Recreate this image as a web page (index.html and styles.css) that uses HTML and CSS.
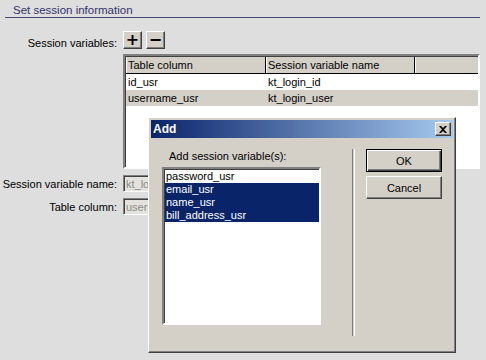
FILE: index.html
```html
<!DOCTYPE html>
<html lang="en">
<head>
    <meta charset="UTF-8">
    <title>Set session information</title>
    <link rel="stylesheet" href="styles.css">
</head>
<body>
    <div class="section-title">Set session information</div>

    <div class="form">
        <div class="label label-top">Session variables:</div>
        <div class="controls">
            <div class="tool-buttons">
                <button class="tool-btn">+</button>
                <button class="tool-btn">&minus;</button>
            </div>
            <div class="grid">
                <div class="grid-head">
                    <div class="head-cell col-1">Table column</div>
                    <div class="head-cell col-2">Session variable name</div>
                    <div class="head-cell col-fill"></div>
                </div>
                <div class="grid-row">
                    <div class="col-1">id_usr</div>
                    <div class="col-2">kt_login_id</div>
                </div>
                <div class="grid-row grid-row-alt">
                    <div class="col-1">username_usr</div>
                    <div class="col-2">kt_login_user</div>
                </div>
            </div>
        </div>

        <div class="label">Session variable name:</div>
        <div class="controls"><input class="field" type="text" value="kt_login_user" disabled></div>

        <div class="label">Table column:</div>
        <div class="controls"><input class="field" type="text" value="username_usr" disabled></div>
    </div>

    <!-- Add dialog sits on top of the form -->
    <div class="dialog">
        <div class="titlebar">
            <span class="title-text">Add</span>
            <span class="close-btn">
                <svg width="8" height="7" viewBox="0 0 8 7"><path d="M0 0h2l2 2 2-2h2L5 3.5 8 7H6L4 5 2 7H0l3-3.5z" fill="#000"/></svg>
            </span>
        </div>
        <div class="dialog-body">
            <div class="dialog-left">
                <div class="list-label">Add session variable(s):</div>
                <div class="listbox">
                    <div class="list-item">password_usr</div>
                    <div class="list-item selected">email_usr</div>
                    <div class="list-item selected">name_usr</div>
                    <div class="list-item selected">bill_address_usr</div>
                </div>
            </div>
            <div class="separator"></div>
            <div class="dialog-buttons">
                <button class="btn btn-default">OK</button>
                <button class="btn">Cancel</button>
            </div>
        </div>
    </div>
</body>
</html>
```

FILE: styles.css
```css
body {
    margin: 0;
    background: #dedede;
    font-family: Tahoma, "Liberation Sans", Arial, sans-serif;
    font-size: 11px;
    color: #000;
    width: 486px;
    height: 360px;
    overflow: hidden;
}

/* Fieldset-like title with a rule under it */
.section-title {
    margin: 0 6px 0 5px;
    padding: 4px 0 0 8px;
    height: 13px;
    line-height: 13px;
    font-size: 11.5px;
    color: #33336b;
    border-bottom: 1px solid #4a4a7c;
}

.form {
    display: grid;
    grid-template-columns: 117px 1fr;
    column-gap: 6px;
    row-gap: 6px;
    margin-top: 13px;
    align-items: center;
}

.label {
    text-align: right;
    white-space: nowrap;
}

.label-top {
    align-self: start;
    padding-top: 6px;
}

.tool-buttons {
    display: flex;
    gap: 4px;
    margin-bottom: 5px;
}

.tool-btn {
    width: 19px;
    height: 18px;
    padding: 0;
    margin: 0;
    background: #d4d0c8;
    border: 1px solid;
    border-color: #fff #404040 #404040 #fff;
    box-shadow: inset -1px -1px #808080;
    font-family: "DejaVu Sans", sans-serif;
    font-size: 16px;
    font-weight: bold;
    line-height: 14px;
}

/* List view with header */
.grid {
    width: 353px;
    height: 111px;
    background: #fff;
    border: 2px solid;
    border-color: #808080 #fff #fff #808080;
    box-shadow: inset 1px 1px #404040;
}

.grid-head {
    display: flex;
    height: 16px;
    margin: 1px 0 0 1px;
    background: #d4d0c8;
    border-bottom: 1px solid #000;
}

.head-cell {
    border-left: 1px solid #fff;
    border-right: 1px solid #000;
    line-height: 16px;
    padding-left: 1px;
    box-sizing: border-box;
}

.col-1 {
    width: 140px;
    flex: none;
    box-sizing: border-box;
}

.col-2 {
    width: 149px;
    flex: none;
    box-sizing: border-box;
}

.col-fill {
    flex: 1;
    border-right: none;
}

.grid-row {
    display: flex;
    height: 16px;
    line-height: 16px;
    margin-left: 1px;
}

.grid-row > div {
    padding-left: 2px;
}

.grid-row-alt {
    background: #d4d0c8;
}

.field {
    width: 200px;
    height: 17px;
    box-sizing: border-box;
    margin: 0;
    padding: 0 2px;
    font: inherit;
    color: #8a8a8a;
    background: #e4e2dd;
    border: 1px solid;
    border-color: #808080 #fff #fff #808080;
    box-shadow: inset 1px 1px #404040;
}

/* Modal dialog */
.dialog {
    position: absolute;
    left: 148px;
    top: 117px;
    width: 308px;
    height: 236px;
    box-sizing: border-box;
    background: #d4d0c8;
    border: 1px solid;
    border-color: #fff #404040 #404040 #fff;
    box-shadow: inset -1px -1px #808080;
    padding: 2px;
}

.titlebar {
    display: flex;
    align-items: center;
    justify-content: space-between;
    height: 18px;
    padding: 0 2px;
    background: linear-gradient(to right, #0a246a, #a6caf0);
}

.title-text {
    color: #fff;
    font-weight: bold;
    font-size: 12px;
}

.close-btn {
    display: flex;
    align-items: center;
    justify-content: center;
    width: 16px;
    height: 14px;
    box-sizing: border-box;
    background: #d4d0c8;
    border: 1px solid;
    border-color: #fff #404040 #404040 #fff;
    box-shadow: inset -1px -1px #808080;
}

.dialog-body {
    display: flex;
    padding-left: 11px;
}

.dialog-left {
    width: 159px;
    padding-top: 12px;
}

.list-label {
    padding-left: 7px;
    height: 17px;
}

.listbox {
    height: 158px;
    box-sizing: border-box;
    background: #fff;
    border: 2px solid;
    border-color: #808080 #fff #fff #808080;
    box-shadow: inset 1px 1px #404040;
    padding: 1px 0 0 1px;
}

.list-item {
    height: 13px;
    line-height: 13px;
    padding-left: 1px;
}

.list-item.selected {
    background: #0a246a;
    color: #fff;
}

.separator {
    width: 1px;
    height: 187px;
    margin: 11px 0 0 31px;
    border-left: 1px solid #808080;
    border-right: 1px solid #fff;
}

.dialog-buttons {
    display: flex;
    flex-direction: column;
    gap: 4px;
    padding: 11px 0 0 11px;
}

.btn {
    width: 76px;
    height: 23px;
    margin: 0;
    padding: 0;
    font: inherit;
    background: #d4d0c8;
    border: 1px solid;
    border-color: #fff #404040 #404040 #fff;
    box-shadow: inset -1px -1px #808080;
}

.btn-default {
    border: 1px solid #000;
    box-shadow: inset 1px 1px #fff, inset -1px -1px #404040, inset -2px -2px #808080;
}
```
